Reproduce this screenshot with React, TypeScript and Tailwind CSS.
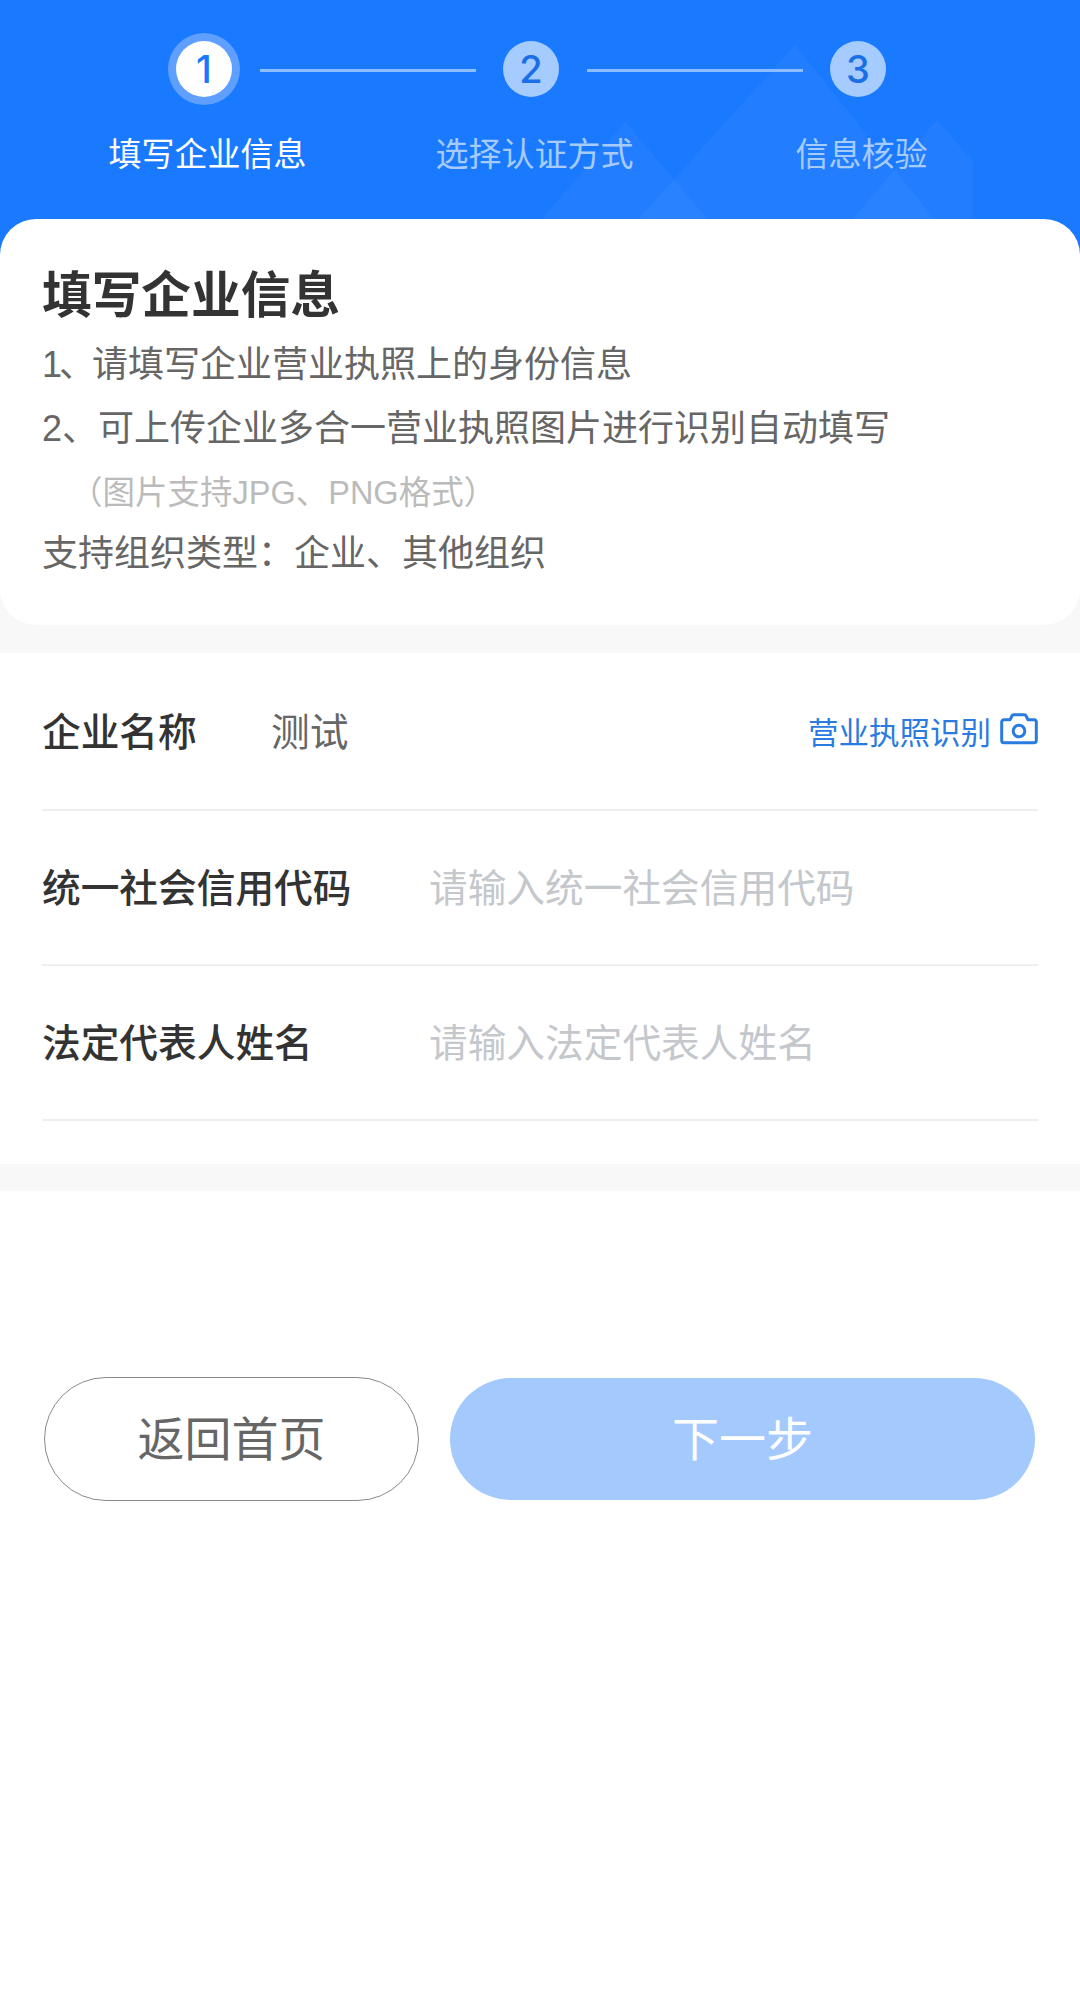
// App.tsx
const steps = [
  { n: 1, label: "填写企业信息" },
  { n: 2, label: "选择认证方式" },
  { n: 3, label: "信息核验" },
];

const rows = [
  { label: "统一社会信用代码", placeholder: "请输入统一社会信用代码" },
  { label: "法定代表人姓名", placeholder: "请输入法定代表人姓名" },
];

function Mountains() {
  return (
    <svg
      className="absolute inset-0 h-[255px] w-[1080px]"
      viewBox="0 0 1080 255"
      fill="#ffffff"
    >
      <polygon points="795,45 606,255 963,255" fillOpacity="0.035" />
      <polygon points="625,122 511,255 738,255" fillOpacity="0.035" />
      <polygon points="937,120 822,255 973,255 973,162" fillOpacity="0.035" />
    </svg>
  );
}

function CameraIcon() {
  return (
    <svg
      className="mb-[10px] h-[32px] w-[38px] shrink-0"
      viewBox="0 0 38 32"
      fill="none"
      stroke="#2a7be0"
      strokeWidth="3"
      strokeLinejoin="round"
    >
      <path d="M4 6.700h6l2.200-4.200a1.500 1.500 0 0 1 1.300-.8h11a1.500 1.500 0 0 1 1.300.8l2.200 4.200h6a2.300 2.300 0 0 1 2.300 2.300v18.500a2.300 2.300 0 0 1-2.300 2.300H4a2.300 2.300 0 0 1-2.300-2.300V9a2.300 2.300 0 0 1 2.300-2.300z" />
      <circle cx="19" cy="18" r="5.800" />
    </svg>
  );
}

export default function App() {
  return (
    <div className="min-h-[2007px] w-[1080px] bg-white font-['Liberation_Sans','Noto_Sans_CJK_SC',sans-serif]">
      {/* Stepper */}
      <div className="relative h-[255px] overflow-hidden bg-[#1a7aff] pt-[33px]">
        <Mountains />
        <div className="relative flex h-[72px] items-center pl-[168px] font-['Inter',sans-serif] font-medium">
          <div className="flex h-[72px] w-[72px] items-center justify-center rounded-full bg-[#5f9fff]">
            <div className="flex h-[56px] w-[56px] items-center justify-center rounded-full bg-white text-[38px] text-[#1a7aff]">
              1
            </div>
          </div>
          <div className="ml-[20px] mt-[2px] h-[3px] w-[216px] bg-[#8dbcff]" />
          <div className="ml-[27px] flex h-[56px] w-[56px] items-center justify-center rounded-full bg-[#a6cbff] text-[38px] text-[#1a6fe8]">
            2
          </div>
          <div className="ml-[28px] mt-[2px] h-[3px] w-[216px] bg-[#8dbcff]" />
          <div className="ml-[27px] flex h-[56px] w-[56px] items-center justify-center rounded-full bg-[#a6cbff] text-[38px] text-[#1a6fe8]">
            3
          </div>
        </div>
        <div className="relative mt-[27px] grid grid-cols-[327px_327px_327px] pl-[44px]">
          {steps.map((s) => (
            <div
              key={s.n}
              className={
                s.n === 1
                  ? "text-center text-[33px] leading-[46px] text-white"
                  : "text-center text-[33px] leading-[46px] text-[#a6cbff]"
              }
            >
              {s.label}
            </div>
          ))}
        </div>
      </div>

      {/* Intro */}
      <div className="bg-[#f8f8f8] pb-[28px]">
        <div className="relative -mt-[36px] rounded-[36px] bg-white pb-[41px] pl-[42px] pt-[47px]">
          <div className="text-[49.7px] font-bold leading-[60px] text-[#333333]">
            填写企业信息
          </div>
          <div className="mt-[7px] text-[36px] leading-[64px] text-[#666666]">
            <span className="tracking-[-3px]">1、</span>请填写企业营业执照上的身份信息
          </div>
          <div className="text-[36px] leading-[64px] text-[#666666]">
            2、可上传企业多合一营业执照图片进行识别自动填写
          </div>
          <div className="pl-[28px] text-[32.5px] leading-[64px] text-[#bbbbbb]">
            （图片支持JPG、PNG格式）
          </div>
          <div className="-mt-[1px] text-[36px] leading-[60px] text-[#666666]">
            支持组织类型：企业、其他组织
          </div>
        </div>
      </div>

      {/* Form */}
      <div className="px-[42px] pb-[43px]">
        <div className="flex h-[158px] items-center border-b-2 border-[#eeeeee] pt-[5px]">
          <div className="w-[229px] text-[38.7px] font-medium text-[#333333]">
            企业名称
          </div>
          <div className="flex-1 text-[38.7px] text-[#666666]">测试</div>
          <div className="flex items-center gap-[9px]">
            <span className="text-[30.5px] text-[#2a7be0]">营业执照识别</span>
            <CameraIcon />
          </div>
        </div>
        {rows.map((r) => (
          <div
            key={r.label}
            className="flex h-[155px] items-center border-b-2 border-[#eeeeee] pt-[3px]"
          >
            <div className="w-[387px] text-[38.7px] font-medium text-[#333333]">
              {r.label}
            </div>
            <div className="text-[38.7px] text-[#c4c7cc]">{r.placeholder}</div>
          </div>
        ))}
      </div>
      <div className="h-[27px] bg-[#f8f8f8]" />

      {/* Actions */}
      <div className="flex items-center gap-[31px] pl-[44px] pt-[186px]">
        <button
          type="button"
          className="h-[124px] w-[375px] rounded-full border border-[#8a8a8a] bg-white pt-[2px] text-[47px] text-[#666666]"
        >
          返回首页
        </button>
        <button
          type="button"
          className="h-[122px] w-[585px] rounded-full bg-[#a3c9fd] pt-[2px] text-[47px] text-white"
        >
          下一步
        </button>
      </div>
    </div>
  );
}
